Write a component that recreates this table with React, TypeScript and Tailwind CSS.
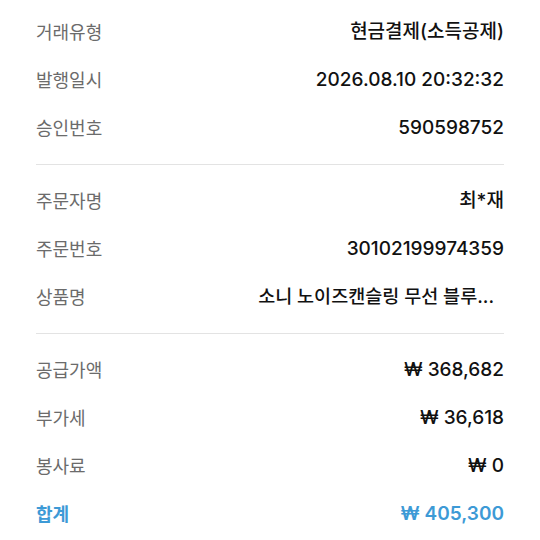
const sections: { label: string; value: string; total?: boolean; cut?: boolean }[][] = [
  [
    { label: "거래유형", value: "현금결제(소득공제)" },
    { label: "발행일시", value: "2026.08.10 20:32:32" },
    { label: "승인번호", value: "590598752" },
  ],
  [
    { label: "주문자명", value: "최*재" },
    { label: "주문번호", value: "30102199974359" },
    { label: "상품명", value: "소니 노이즈캔슬링 무선 블루...", cut: true },
  ],
  [
    { label: "공급가액", value: "₩ 368,682" },
    { label: "부가세", value: "₩ 36,618" },
    { label: "봉사료", value: "₩ 0" },
    { label: "합계", value: "₩ 405,300", total: true },
  ],
];

export default function App() {
  return (
    <div className="min-h-screen bg-white px-9 pt-2 font-['Inter','Noto_Sans_CJK_KR',sans-serif]">
      {sections.map((rows, i) => (
        <div key={i}>
          {i > 0 && <div className="my-3 h-px bg-[#e3e3e3]" />}
          {rows.map((row) => (
            <div key={row.label} className="flex h-12 items-center justify-between">
              <span
                className={
                  row.total
                    ? "text-[18px] font-semibold text-[#3d9ad6]"
                    : "text-[18px] text-[#6b6b6b]"
                }
              >
                {row.label}
              </span>
              <span
                className={
                  (row.total ? "font-semibold text-[#3d9ad6]" : "font-medium text-[#111111]") +
                  (row.cut ? " pr-[10px] text-[18.5px]" : " text-[19px]")
                }
              >
                {row.value}
              </span>
            </div>
          ))}
        </div>
      ))}
    </div>
  );
}
